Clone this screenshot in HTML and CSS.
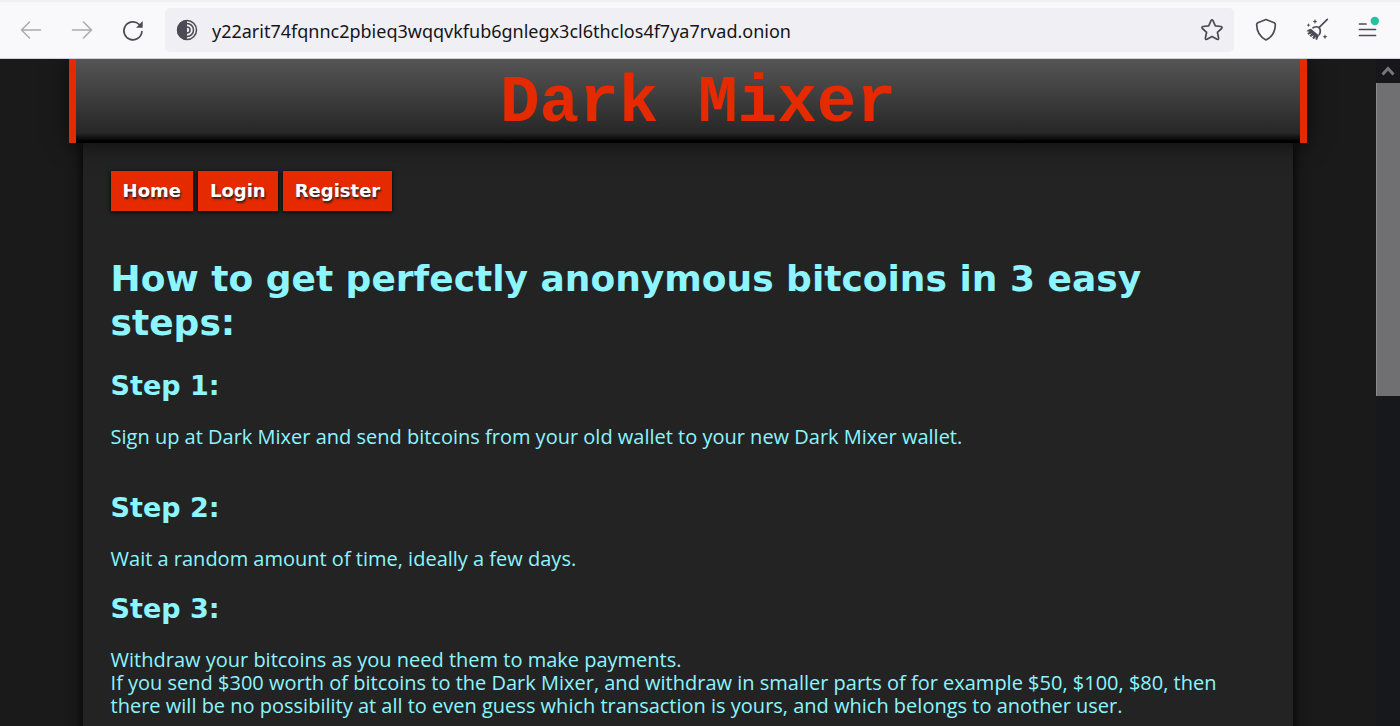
FILE: index.html
```html
<!DOCTYPE html>
<html lang="en">
<head>
<meta charset="utf-8">
<title>Dark Mixer</title>
<link rel="stylesheet" href="styles.css">
</head>
<body>
<div class="toolbar">
  <div class="nav-buttons">
    <button class="tool faded" type="button" aria-label="Back"><svg width="24" height="24" viewBox="0 0 24 24"><path d="M21.500 12H2.500M10.500 4L2.500 12L10.500 20"/></svg></button>
    <button class="tool faded" type="button" aria-label="Forward"><svg width="24" height="24" viewBox="0 0 24 24"><path d="M2.500 12H21.500M13.500 4L21.500 12L13.500 20"/></svg></button>
    <button class="tool" type="button" aria-label="Reload"><svg width="24" height="24" viewBox="0 0 24 24"><path class="bold" d="M20.900 13.500A9 9 0 1 1 18.300 6.500"/><path class="solid" d="M21.700 3V9.800H15Z"/></svg></button>
  </div>
  <div class="address">
    <svg class="site-icon" width="24" height="24" viewBox="0 0 24 24" aria-hidden="true"><circle cx="12" cy="12" r="9.500"/><path class="solid" d="M12 2A10 10 0 0 0 12 22Z"/><path d="M12 5.500A6.500 6.500 0 0 1 12 18.500M12 9A3 3 0 0 1 12 15"/></svg>
    <input class="url" type="text" aria-label="Address" value="y22arit74fqnnc2pbieq3wqqvkfub6gnlegx3cl6thclos4f7ya7rvad.onion">
    <button class="tool" type="button" aria-label="Bookmark"><svg width="24" height="24" viewBox="0 0 24 24"><path class="bold" d="M11 2.600Q12 1 13 2.600L15.300 7.800L21 8.500Q22.800 9 21.600 10.500L17.400 14.300L18.600 20Q18.700 22 17 21.300L12 18.400L7 21.300Q5.300 22 5.400 20L6.600 14.300L2.400 10.500Q1.200 9 3 8.500L8.700 7.800Z"/></svg></button>
  </div>
  <div class="extras">
    <button class="tool" type="button" aria-label="Security level"><svg width="24" height="24" viewBox="0 0 24 24"><path class="bold" d="M12 1.500L20.200 4.700Q21.400 5.300 21.300 6.800C21.200 14 18 19 12 22C6 19 2.800 14 2.700 6.800Q2.600 5.300 3.800 4.700Z"/></svg></button>
    <button class="tool" type="button" aria-label="New identity"><svg width="24" height="24" viewBox="0 0 24 24"><path class="bold" d="M22.300 1.300L14 9.600M8 9.800Q11.500 7.800 14 9.600Q16.500 12.500 14.300 16.500"/><path class="solid" d="M6 10.800L14 17.500L12 22L10.300 21.200L11 18.500L8.800 21.200L7.300 20L8.800 17L5.800 19L4.500 17.600L7 15.300L3.300 16.800L2.300 15.200L4.500 13.800L1.300 13.300Q3.500 11 6 10.800ZM10 1L10.700 2.800L12.300 3.500L10.700 4.200L10 6L9.300 4.200L7.700 3.500L9.300 2.800ZM3.500 5.300L4.100 6.600L5.300 7.200L4.100 7.800L3.500 9.100L2.900 7.800L1.700 7.200L2.900 6.600ZM20 16.300L20.700 18.100L22.500 18.800L20.700 19.500L20 21.300L19.300 19.500L17.500 18.800L19.300 18.100Z"/></svg></button>
    <button class="tool menu" type="button" aria-label="Menu"><svg width="24" height="24" viewBox="0 0 24 24"><path class="bold" d="M3.500 6H10M3.500 11.500H19.500M3.500 17.500H19.500"/><circle class="dot" cx="18.800" cy="3" r="4.200"/></svg></button>
  </div>
</div>
<div class="viewport">
  <div class="page">
    <header class="banner"><div class="brand">Dark Mixer</div></header>
    <main class="content">
      <nav class="links">
        <a href="#home">Home</a>
        <a href="#login">Login</a>
        <a href="#register">Register</a>
      </nav>
      <h1>How to get perfectly anonymous bitcoins in 3 easy steps:</h1>
      <section class="step spaced">
        <h2>Step 1:</h2>
        <p>Sign up at Dark Mixer and send bitcoins from your old wallet to your new Dark Mixer wallet.</p>
      </section>
      <section class="step">
        <h2>Step 2:</h2>
        <p>Wait a random amount of time, ideally a few days.</p>
      </section>
      <section class="step">
        <h2>Step 3:</h2>
        <p>Withdraw your bitcoins as you need them to make payments.<br>If you send $300 worth of bitcoins to the Dark Mixer, and withdraw in smaller parts of for example $50, $100, $80, then there will be no possibility at all to even guess which transaction is yours, and which belongs to another user.</p>
      </section>
    </main>
  </div>
  <div class="scrollbar">
    <button class="scroll-up" type="button" aria-label="Scroll up"><svg width="14" height="12" viewBox="0 0 14 12"><path d="M1.500 9.500L7 3.500L12.500 9.500"/></svg></button>
    <div class="thumb"></div>
  </div>
</div>
</body>
</html>
```
FILE: styles.css
```css
* {
  box-sizing: border-box;
}

body {
  display: flex;
  flex-direction: column;
  height: 100vh;
  margin: 0;
  overflow: hidden;
  background: #1a1a1a;
}

.toolbar {
  flex: none;
  display: flex;
  align-items: center;
  height: 59px;
  padding: 0 20px 0 19px;
  background: #f9f9fb;
  border-top: 2px solid #f0f0f2;
  border-bottom: 1px solid #d0d0d4;
}

.nav-buttons {
  display: flex;
  gap: 27px;
  margin-right: 20px;
}

.tool {
  display: flex;
  padding: 0;
  border: 0;
  background: none;
}

.tool svg,
.site-icon {
  flex: none;
  fill: none;
  stroke: #4c4b55;
  stroke-width: 1.500;
  stroke-linecap: round;
  stroke-linejoin: round;
  overflow: visible;
}

.tool .bold {
  stroke-width: 1.700;
}

.tool .solid,
.site-icon .solid {
  fill: #4c4b55;
  stroke: none;
}

.tool .dot {
  fill: #22c3a0;
  stroke: none;
}

.faded {
  opacity: 0.45;
}

.address {
  flex: 1;
  display: flex;
  align-items: center;
  gap: 13px;
  height: 44px;
  padding: 0 10px;
  border-radius: 5px;
  background: #f0f0f4;
}

.url {
  flex: 1;
  min-width: 0;
  padding: 2px 0 0;
  border: 0;
  background: none;
  color: #15141a;
  font: 18px "Noto Sans", "Open Sans", sans-serif;
}

.extras {
  display: flex;
  gap: 27px;
  margin-left: 20px;
}

.viewport {
  flex: 1;
  display: flex;
  min-height: 0;
}

.page {
  flex: 1;
  display: flex;
  flex-direction: column;
  align-items: center;
  min-width: 0;
  overflow: hidden;
  color: #8df5ff;
  font-family: "DejaVu Sans", Verdana, sans-serif;
}

.banner {
  position: relative;
  flex: none;
  width: 90%;
  height: 84px;
  border: 0 solid #e62a00;
  border-width: 0 7px;
  background: linear-gradient(#555 0%, #272727 88%, #000 98%);
  box-shadow: 0 2px 20px rgba(0, 0, 0, 0.6);
}

.brand {
  padding: 6px 0 0 20px;
  color: #e62a00;
  font: bold 66px/78px "Courier New", "Liberation Mono", monospace;
  text-align: center;
}

.content {
  flex: 1 0 auto;
  width: 88%;
  padding: 28px;
  background: #232323;
  box-shadow: 0 0 12px #000;
}

.links {
  display: flex;
  gap: 5px;
}

.links a {
  padding: 0 12px;
  background: #e62a00;
  box-shadow: 0 1px 4px #000;
  color: #fff;
  font-size: 18px;
  font-weight: bold;
  line-height: 40px;
  text-decoration: none;
  text-shadow: 1px 2px 2px #222;
}

h1 {
  margin: 46px 0 24px;
  font-size: 36px;
  line-height: 44px;
}

h2 {
  margin: 0 0 22px;
  font-size: 27px;
  line-height: 34px;
}

p {
  margin: 0;
  font-family: "Open Sans", Tahoma, sans-serif;
  font-size: 20px;
  line-height: 23px;
}

.step {
  margin-bottom: 22px;
}

.spaced {
  margin-bottom: 43px;
}

.scrollbar {
  flex: none;
  display: flex;
  flex-direction: column;
  width: 24px;
  background: #17181b;
}

.scroll-up {
  display: flex;
  align-items: center;
  justify-content: center;
  height: 24px;
  padding: 0;
  border: 0;
  background: #17171b;
}

.scroll-up svg {
  fill: none;
  stroke: #77777a;
  stroke-width: 3;
}

.thumb {
  height: 47%;
  border-left: 1px solid #8b8b8d;
  background: #707072;
}
```
